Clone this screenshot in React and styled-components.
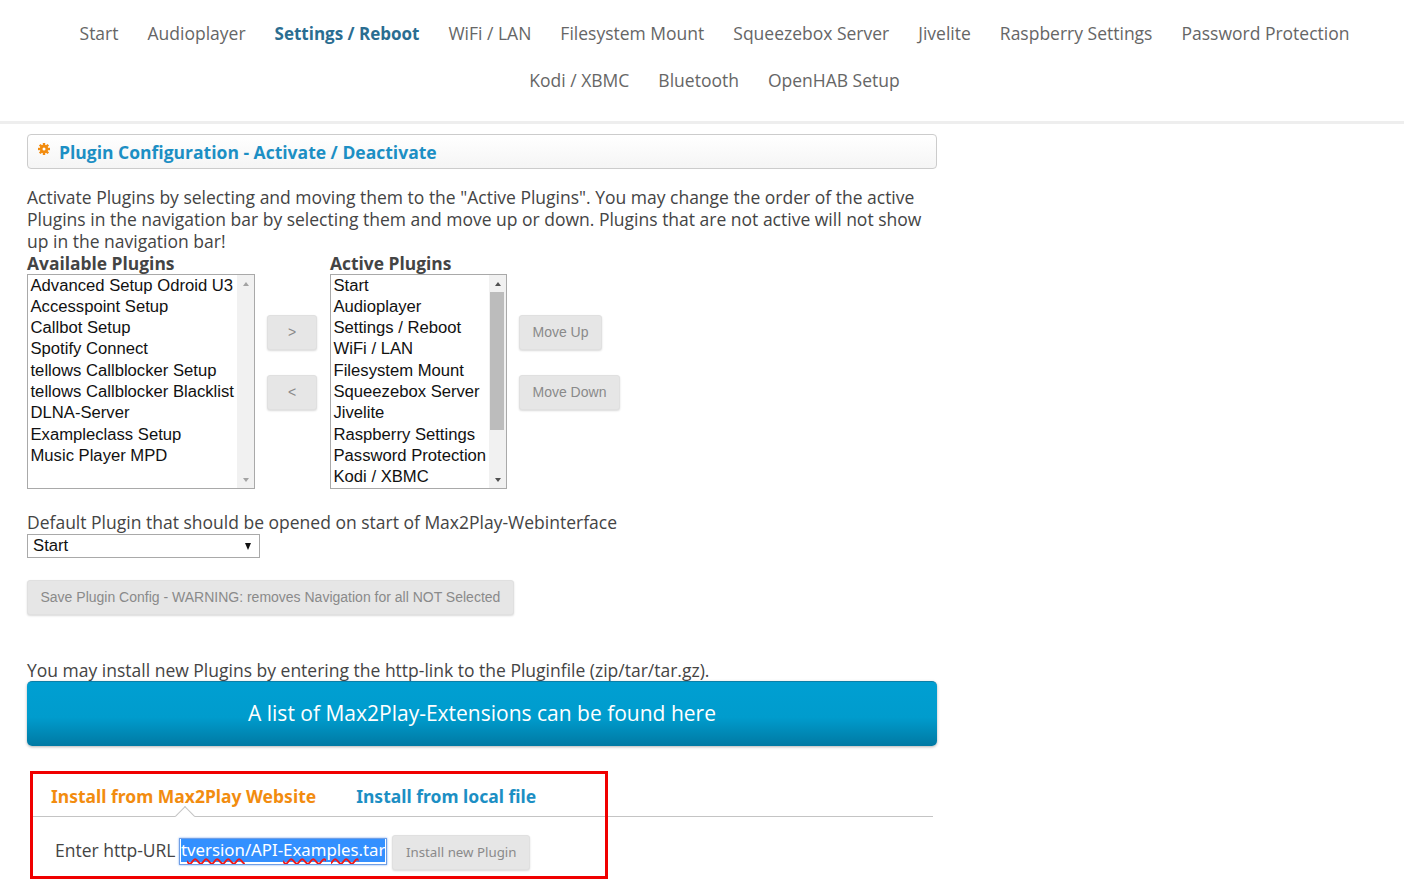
import React from 'react';
import styled, { createGlobalStyle } from 'styled-components';

const GlobalStyle = createGlobalStyle`
    html, body {
        margin: 0;
        padding: 0;
        background: #fff;
    }
    body {
        font-family: "Open Sans", "Noto Sans", sans-serif;
        font-size: 17.5px;
        line-height: 22px;
        color: #444;
    }
`

const Page = styled.div`
    position: relative;
    width: 1404px;
    height: 885px;
    overflow: hidden;
`

const Header = styled.header`
    box-sizing: border-box;
    height: 124px;
    padding: 10px 0 0 25px;
    border-bottom: 3px solid #eeeeee;
`

const Nav = styled.nav`
    display: flex;
    flex-wrap: wrap;
    justify-content: center;
`

const NavLink = styled.a`
    padding: 0 14.5px;
    font-size: ${props => props.$active ? 17 : 17.5}px;
    line-height: 47px;
    white-space: nowrap;
    color: ${props => props.$active ? '#2a6d91' : '#666'};
    font-weight: ${props => props.$active ? 700 : 400};
`

const Main = styled.main`
    width: 910px;
    margin-left: 27px;
    padding-top: 10px;
`

const TitleBar = styled.div`
    box-sizing: border-box;
    display: flex;
    align-items: center;
    height: 35px;
    padding: 0 10px;
    border: 1px solid #ccc;
    border-radius: 4px;
    background: linear-gradient(to bottom, #ffffff, #f5f5f5);
`

const TitleIcon = styled.svg`
    width: 12px;
    height: 12px;
    margin: -6px 9px 0 0;
    flex: none;
`

const Title = styled.h1`
    margin: 0;
    font-size: 17.5px;
    font-weight: 700;
    color: #1c8fc4;
`

const Intro = styled.p`
    margin: 17px 0 0;
    font-size: 17.5px;
    line-height: 22px;
`

const Picker = styled.div`
    display: flex;
    align-items: flex-start;
`

const Column = styled.div`
    display: flex;
    flex-direction: column;
    width: ${props => props.$width}px;
    margin-left: ${props => props.$left || 0}px;
`

const ColumnTitle = styled.div`
    font-size: 17.4px;
    font-weight: 700;
    line-height: 22px;
    height: 22px;
`

const ListBox = styled.div`
    box-sizing: border-box;
    display: flex;
    height: 215px;
    border: 1px solid #a9a9a9;
    background: #fff;
`

const Options = styled.div`
    flex: 1;
    min-width: 0;
    overflow: hidden;
    margin-top: -0.5px;
    padding-left: ${props => props.$pad}px;
`

const Option = styled.div`
    font-family: "Liberation Sans", Arial, sans-serif;
    font-size: 16.65px;
    line-height: 21.3px;
    white-space: nowrap;
    color: #111;
`

const Scrollbar = styled.div`
    flex: none;
    display: flex;
    flex-direction: column;
    width: 17px;
    background: #f1f1f1;
`

const ScrollArrow = styled.div`
    flex: none;
    height: 17px;
    display: flex;
    align-items: center;
    justify-content: center;
    &::before {
        content: '';
        border-left: 3.5px solid transparent;
        border-right: 3.5px solid transparent;
        border-${props => props.$down ? 'top' : 'bottom'}: 4px solid ${props => props.$dark ? '#505050' : '#a3a3a3'};
    }
`

const ScrollTrack = styled.div`
    flex: 1;
    padding: 0 2px 0 1px;
`

const ScrollThumb = styled.div`
    height: 138px;
    background: #bcbcbc;
`

const ButtonStack = styled.div`
    display: flex;
    flex-direction: column;
    align-items: flex-start;
    gap: 25px;
    padding-top: 63px;
    margin-left: ${props => props.$left}px;
`

const GreyButton = styled.button`
    box-sizing: border-box;
    height: 35px;
    width: ${props => props.$width ? props.$width + 'px' : 'auto'};
    padding: 0 12.5px 2px;
    border: 1px solid #e0e0e0;
    border-radius: 3px;
    background: #e6e6e6;
    box-shadow: 0 1px 2px rgba(0, 0, 0, 0.15);
    font-family: "Liberation Sans", Arial, sans-serif;
    font-size: 14px;
    color: #8a8a8a;
    white-space: nowrap;
`

const DefaultLabel = styled.div`
    margin-top: 22px;
    font-size: 17.5px;
    line-height: 23px;
`

const SelectBox = styled.div`
    box-sizing: border-box;
    display: flex;
    align-items: center;
    justify-content: space-between;
    width: 233px;
    height: 24px;
    padding: 0 8px 0 5px;
    border: 1px solid #a9a9a9;
    font-family: "Liberation Sans", Arial, sans-serif;
    font-size: 16.7px;
    color: #111;
`

const SelectArrow = styled.span`
    border-left: 3.5px solid transparent;
    border-right: 3.5px solid transparent;
    border-top: 7px solid #111;
`

const SaveRow = styled.div`
    margin-top: 22px;
`

const InstallNote = styled.div`
    margin-top: 44px;
    font-size: 17.5px;
    line-height: 22px;
`

const BigLink = styled.a`
    box-sizing: border-box;
    display: flex;
    align-items: center;
    justify-content: center;
    height: 65px;
    padding-bottom: 2px;
    border-radius: 5px;
    border-top: 1px solid #0b7fa8;
    background: linear-gradient(to bottom, #009fd2 0%, #009ccd 55%, #0079a3 100%);
    box-shadow: 0 1px 3px rgba(0, 0, 0, 0.3);
    font-size: 21px;
    color: #fff;
`

const TabArea = styled.section`
    width: 900px;
    margin: 25px 0 0 6px;
`

const TabBar = styled.div`
    position: relative;
    display: flex;
    align-items: center;
    gap: 40px;
    box-sizing: content-box;
    height: 41px;
    padding: 4px 0 0 18px;
    border-bottom: 1px solid #c4c4c4;
`

const Tab = styled.a`
    font-family: "Noto Sans", "Open Sans", sans-serif;
    font-size: 17.5px;
    font-weight: 700;
    color: ${props => props.$active ? '#f28c0f' : '#1c8fc4'};
`

const TabNotch = styled.span`
    position: absolute;
    left: 145px;
    bottom: -7px;
    width: 13px;
    height: 13px;
    background: #fff;
    border-left: 1px solid #c4c4c4;
    border-top: 1px solid #c4c4c4;
    transform: rotate(45deg);
`

const UrlForm = styled.div`
    display: flex;
    align-items: center;
    padding: 18px 0 0 22px;
    height: 35px;
`

const UrlLabel = styled.label`
    font-size: 17.5px;
    margin: 0 4px 6px 0;
`

const UrlInput = styled.div`
    box-sizing: border-box;
    display: flex;
    justify-content: flex-end;
    align-items: center;
    width: 208px;
    height: 27px;
    margin: 0 5px 2px 0;
    padding: 0 1px 2px;
    overflow: hidden;
    border: 1px solid #6f9fe6;
    box-shadow: 0 0 2px #7aa7ee;
`

const UrlValue = styled.span`
    flex: none;
    padding: 1px 0 2px;
    font-family: "Noto Sans", "Open Sans", sans-serif;
    font-size: 16.8px;
    line-height: 20px;
    white-space: nowrap;
    color: #fff;
    background: #3390ff;
`

const Misspelled = styled.span`
    text-decoration: underline wavy #f01818 1.5px;
    text-underline-offset: 2px;
`

const InstallButton = styled(GreyButton)`
    font-family: "Noto Sans", "Open Sans", sans-serif;
    font-size: 13.3px;
`

// red marker somebody drew on top of the screenshot
const Marker = styled.div`
    position: absolute;
    box-sizing: border-box;
    left: 30px;
    top: 771px;
    width: 578px;
    height: 108px;
    border: 3px solid #f00000;
    pointer-events: none;
`

const navItems = [
    'Start', 'Audioplayer', 'Settings / Reboot', 'WiFi / LAN', 'Filesystem Mount',
    'Squeezebox Server', 'Jivelite', 'Raspberry Settings', 'Password Protection',
    'Kodi / XBMC', 'Bluetooth', 'OpenHAB Setup',
]

const available = [
    'Advanced Setup Odroid U3', 'Accesspoint Setup', 'Callbot Setup', 'Spotify Connect',
    'tellows Callblocker Setup', 'tellows Callblocker Blacklist', 'DLNA-Server',
    'Exampleclass Setup', 'Music Player MPD',
]

const active = [
    'Start', 'Audioplayer', 'Settings / Reboot', 'WiFi / LAN', 'Filesystem Mount',
    'Squeezebox Server', 'Jivelite', 'Raspberry Settings', 'Password Protection', 'Kodi / XBMC',
]

const Gear = () => (
    <TitleIcon viewBox="0 0 12 12">
        <g fill="#f28c0f">
            <circle cx="6" cy="6" r="4.2" />
            <rect x="4.8" y="0" width="2.4" height="12" />
            <rect x="0" y="4.8" width="12" height="2.4" />
            <rect x="4.8" y="0" width="2.4" height="12" transform="rotate(45 6 6)" />
            <rect x="4.8" y="0" width="2.4" height="12" transform="rotate(-45 6 6)" />
        </g>
        <circle cx="6" cy="6" r="1.5" fill="#fff" />
    </TitleIcon>
)

const PluginList = ({ items, thumb }) => (
    <ListBox>
        <Options $pad={2.5}>
            {items.map(item => <Option key={item}>{item}</Option>)}
        </Options>
        <Scrollbar>
            <ScrollArrow $dark={thumb} />
            <ScrollTrack>{thumb && <ScrollThumb />}</ScrollTrack>
            <ScrollArrow $down $dark={thumb} />
        </Scrollbar>
    </ListBox>
)

const App = () => {
    return (
        <Page>
            <GlobalStyle />
            <Header>
                <Nav>
                    {navItems.map(item => (
                        <NavLink key={item} $active={item === 'Settings / Reboot'}>{item}</NavLink>
                    ))}
                </Nav>
            </Header>
            <Main>
                <TitleBar>
                    <Gear />
                    <Title>Plugin Configuration - Activate / Deactivate</Title>
                </TitleBar>
                <Intro>
                    Activate Plugins by selecting and moving them to the "Active Plugins". You may change the order of the active
                    Plugins in the navigation bar by selecting them and move up or down. Plugins that are not active will not show
                    up in the navigation bar!
                </Intro>
                <Picker>
                    <Column $width={228}>
                        <ColumnTitle>Available Plugins</ColumnTitle>
                        <PluginList items={available} />
                    </Column>
                    <ButtonStack $left={12}>
                        <GreyButton $width={50}>&gt;</GreyButton>
                        <GreyButton $width={50}>&lt;</GreyButton>
                    </ButtonStack>
                    <Column $width={177} $left={13}>
                        <ColumnTitle>Active Plugins</ColumnTitle>
                        <PluginList items={active} thumb />
                    </Column>
                    <ButtonStack $left={12}>
                        <GreyButton>Move Up</GreyButton>
                        <GreyButton>Move Down</GreyButton>
                    </ButtonStack>
                </Picker>
                <DefaultLabel>Default Plugin that should be opened on start of Max2Play-Webinterface</DefaultLabel>
                <SelectBox>
                    Start
                    <SelectArrow />
                </SelectBox>
                <SaveRow>
                    <GreyButton>Save Plugin Config - WARNING: removes Navigation for all NOT Selected</GreyButton>
                </SaveRow>
                <InstallNote>You may install new Plugins by entering the http-link to the Pluginfile (zip/tar/tar.gz).</InstallNote>
                <BigLink>A list of Max2Play-Extensions can be found here</BigLink>
                <TabArea>
                    <TabBar>
                        <Tab $active>Install from Max2Play Website</Tab>
                        <Tab>Install from local file</Tab>
                        <TabNotch />
                    </TabBar>
                    <UrlForm>
                        <UrlLabel>Enter http-URL</UrlLabel>
                        <UrlInput>
                            <UrlValue>t<Misspelled>version</Misspelled>/API-<Misspelled>Examples</Misspelled>.tar</UrlValue>
                        </UrlInput>
                        <InstallButton>Install new Plugin</InstallButton>
                    </UrlForm>
                </TabArea>
            </Main>
            <Marker />
        </Page>
    );
}

export default App;
